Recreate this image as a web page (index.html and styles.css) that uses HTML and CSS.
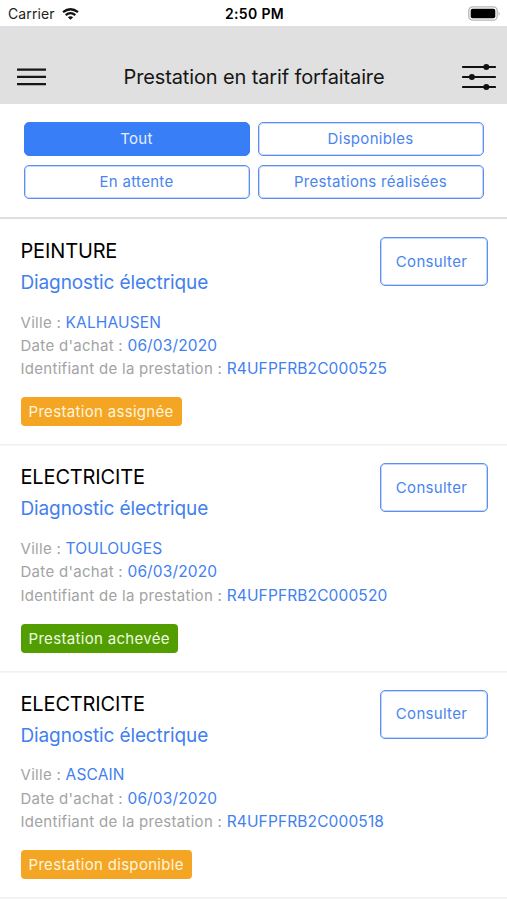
FILE: index.html
```html
<!DOCTYPE html>
<html lang="fr">
<head>
<meta charset="utf-8">
<title>Prestation en tarif forfaitaire</title>
<link rel="stylesheet" href="styles.css">
</head>
<body>
<div class="status">
  <div class="carrier"><span>Carrier</span>
    <svg class="wifi" width="17" height="12" viewBox="0 0 17 12"><g fill="none" stroke="#111" stroke-width="2.3"><path d="M1 4.200Q8.500-1.800 16 4.200"/><path d="M3.700 7.100Q8.500 3.100 13.300 7.100"/></g><path d="M5.900 9.200Q8.500 7.100 11.100 9.200L8.500 11.800Z" fill="#111"/></svg>
  </div>
  <div class="time">2:50 PM</div>
  <svg class="battery" width="33" height="16" viewBox="0 0 33 16"><rect x=".8" y=".8" width="28.400" height="13.400" rx="4" fill="#fff" stroke="#b5b5b5" stroke-width="1.300"/><rect x="2.700" y="2.700" width="24.600" height="9.600" rx="2" fill="#000"/><path d="M30.700 5.200q1.600 2.300 0 4.600z" fill="#999"/></svg>
</div>
<header class="nav">
  <svg class="menu" width="29" height="18" viewBox="0 0 29 18"><path d="M.5 1.600H28.500M.5 8.900H28.500M.5 16.200H28.500" stroke="#161616" stroke-width="2.300" stroke-linecap="round"/></svg>
  <h1>Prestation en tarif forfaitaire</h1>
  <svg class="sliders" width="34" height="28" viewBox="0 0 34 28"><path d="M1 4H33M1 14H33M1 24H33" stroke="#111" stroke-width="2.100" stroke-linecap="round"/><g fill="#111"><circle cx="24.300" cy="4" r="3"/><circle cx="9.900" cy="14" r="3"/><circle cx="24.300" cy="24" r="3"/></g></svg>
</header>
<nav class="filters">
  <button class="btn active">Tout</button>
  <button class="btn">Disponibles</button>
  <button class="btn">En attente</button>
  <button class="btn">Prestations réalisées</button>
</nav>
<main>
  <article class="card">
    <div class="info">
      <h2>PEINTURE</h2>
      <h3>Diagnostic électrique</h3>
      <ul class="meta">
        <li>Ville : <b>KALHAUSEN</b></li>
        <li>Date d'achat : <b>06/03/2020</b></li>
        <li>Identifiant de la prestation : <b>R4UFPFRB2C000525</b></li>
      </ul>
      <span class="badge">Prestation assignée</span>
    </div>
    <button class="btn consult">Consulter</button>
  </article>
  <article class="card">
    <div class="info">
      <h2>ELECTRICITE</h2>
      <h3>Diagnostic électrique</h3>
      <ul class="meta">
        <li>Ville : <b>TOULOUGES</b></li>
        <li>Date d'achat : <b>06/03/2020</b></li>
        <li>Identifiant de la prestation : <b>R4UFPFRB2C000520</b></li>
      </ul>
      <span class="badge done">Prestation achevée</span>
    </div>
    <button class="btn consult">Consulter</button>
  </article>
  <article class="card">
    <div class="info">
      <h2>ELECTRICITE</h2>
      <h3>Diagnostic électrique</h3>
      <ul class="meta">
        <li>Ville : <b>ASCAIN</b></li>
        <li>Date d'achat : <b>06/03/2020</b></li>
        <li>Identifiant de la prestation : <b>R4UFPFRB2C000518</b></li>
      </ul>
      <span class="badge">Prestation disponible</span>
    </div>
    <button class="btn consult">Consulter</button>
  </article>
</main>
</body>
</html>
```
FILE: styles.css
```css
* { box-sizing: border-box; }
body {
  margin: 0;
  height: 900px;
  overflow: hidden;
  background: #fff;
  color: #000;
  font-family: Inter, "Liberation Sans", sans-serif;
}
h1, h2, h3, ul { margin: 0; padding: 0; font-weight: 400; }
svg { display: block; }

.status {
  display: grid;
  grid-template-columns: 1fr auto 1fr;
  align-items: center;
  height: 26px;
  padding: 1px 6px 0 8px;
  font-size: 14px;
}
.carrier { display: flex; align-items: center; gap: 7px; color: #222; letter-spacing: 0.1px; }
.time { font-weight: 600; letter-spacing: 0.35px; }
.battery { justify-self: end; }

.nav {
  display: grid;
  grid-template-columns: 34px 1fr 34px;
  align-items: center;
  height: 78px;
  padding: 24px 11px 0 17px;
  background: #e0e0e0;
}
.nav h1 {
  padding-right: 5px;
  font-size: 20px;
  line-height: 28px;
  letter-spacing: -0.13px;
  text-align: center;
  color: #161616;
}

.filters {
  display: grid;
  grid-template-columns: 1fr 1fr;
  gap: 9px 8px;
  height: 115px;
  padding: 18px 23px 18px 24px;
  grid-auto-rows: 34px;
  border-bottom: 2px solid #dedede;
}
.btn {
  padding: 0 1px 0 0;
  border: 1px solid #5b8fef;
  border-radius: 5px;
  box-shadow: inset 0 0 0 1px #c5d8fb;
  background: #fff;
  color: #4a85ef;
  font: 400 15px/20px Inter, "Liberation Sans", sans-serif;
  letter-spacing: 0.3px;
}
.btn.active { background: #387ef7; border-color: #387ef7; box-shadow: none; color: #e4eeff; }

.card {
  display: flex;
  justify-content: space-between;
  align-items: flex-start;
  height: 226.4px;
  padding: 17px 19px 0 20.5px;
  box-shadow: 0 1px #f5f5f5, inset 0 -1px #f0f0f0;
}
.info { flex: 1; min-width: 0; }
.card h2 { font-size: 20px; line-height: 31px; letter-spacing: -0.15px; }
.card h3 { font-size: 19px; line-height: 31px; letter-spacing: -0.12px; color: #427ff0; }
.meta {
  margin-top: 12.6px;
  list-style: none;
  font-size: 15px;
  line-height: 23.3px;
  letter-spacing: 0.29px;
  color: #a3a3a3;
  white-space: nowrap;
}
.meta b { font-size: 15.5px; line-height: 1; font-weight: 400; letter-spacing: 0.13px; color: #427ff0; }
.badge {
  display: inline-block;
  margin-top: 16.9px;
  padding: 0 8px;
  border-radius: 4px;
  background: #f5a524;
  color: #fff5dc;
  font-size: 15px;
  line-height: 29px;
  letter-spacing: 0.32px;
}
.badge.done { background: #529e00; color: #effbe0; }
.consult { flex: none; width: 108px; height: 49px; margin-top: 1px; padding-right: 5px; }
```
